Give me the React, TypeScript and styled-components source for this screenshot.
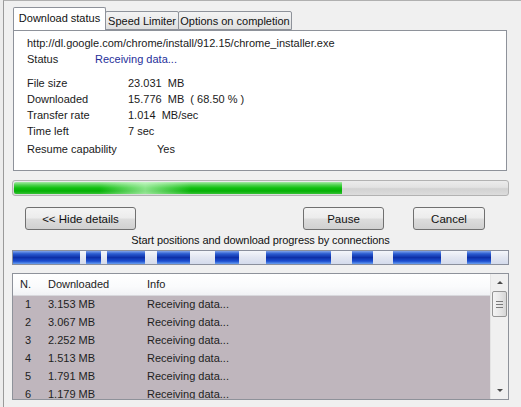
import React from 'react';
import styled, { createGlobalStyle } from 'styled-components';

const GlobalStyle = createGlobalStyle`
  html, body {
    margin: 0;
    padding: 0;
    background: #ececec;
    font-family: "Liberation Sans", Arial, sans-serif;
    font-size: 11px;
    color: #1a1a1a;
  }
  * { box-sizing: border-box; }
`;

const Frame = styled.div`
  width: 518px;
  height: 407px;
  margin-left: 3px;
  border-left: 1px solid #9a9a9a;
  border-top: 1px solid #b0b0b0;
  background: #f0f0f0;
  padding: 7px 0 0 8px;
  overflow: hidden;
`;

const TabStrip = styled.div`
  display: flex;
  align-items: flex-end;
  margin-left: 1px;
  height: 22px;
  position: relative;
  z-index: 1;
`;

const Tab = styled.div<{ $active?: boolean; $w: number }>`
  width: ${(p) => p.$w}px;
  height: ${(p) => (p.$active ? 23 : 19)}px;
  margin-right: -1px;
  border: 1px solid #8e929a;
  border-bottom: ${(p) => (p.$active ? 'none' : '1px solid #8e929a')};
  border-radius: 2px 2px 0 0;
  background: ${(p) =>
    p.$active ? '#ffffff' : 'linear-gradient(#f3f3f3 0%, #ebebeb 50%, #dedede 100%)'};
  display: flex;
  align-items: center;
  justify-content: center;
  padding-bottom: ${(p) => (p.$active ? 2 : 0)}px;
  font-size: 11px;
  color: #111;
  white-space: nowrap;
`;

const Panel = styled.div`
  width: 494px;
  height: 141px;
  margin-left: 1px;
  border: 1px solid #8e929a;
  background: #ffffff;
  padding: 4px 0 0 13px;
`;

const Line = styled.div<{ $labelW?: number; $gap?: number }>`
  display: flex;
  height: 16px;
  line-height: 16px;
  margin-top: ${(p) => p.$gap ?? 0}px;
  white-space: pre;
  & > span:first-child {
    width: ${(p) => p.$labelW ?? 0}px;
    flex: none;
  }
`;

const Blue = styled.span`
  color: #1f2f9a;
`;

const Progress = styled.div`
  width: 497px;
  height: 16px;
  margin-top: 9px;
  border: 1px solid #b2b2b2;
  border-radius: 3px;
  padding: 1px;
  background: linear-gradient(#ececec 0%, #e2e2e2 45%, #d2d2d2 55%, #dcdcdc 100%);
  display: flex;
`;

const Fill = styled.div`
  height: 100%;
  border-radius: 2px 0 0 2px;
  background:
    linear-gradient(90deg, rgba(255, 255, 255, 0) 26%, rgba(220, 255, 220, 0.6) 40%, rgba(255, 255, 255, 0) 54%),
    linear-gradient(180deg, #a6eaa6 0%, #4fd24f 25%, #10c010 50%, #07b007 75%, #34c234 100%);
`;

const ButtonRow = styled.div`
  display: flex;
  align-items: center;
  margin-top: 11px;
  padding: 0 24px 0 13px;
  width: 497px;
`;

const Button = styled.button<{ $w: number; $push?: boolean; $gap?: number }>`
  width: ${(p) => p.$w}px;
  height: 23px;
  margin-left: ${(p) => (p.$push ? 'auto' : `${p.$gap ?? 0}px`)};
  border: 1px solid #707070;
  border-radius: 3px;
  background: linear-gradient(#f4f4f4 0%, #ececec 48%, #dddddd 52%, #d0d0d0 100%);
  font-family: "Liberation Sans", Arial, sans-serif;
  font-size: 11.5px;
  color: #111;
  padding: 0;
`;

const Caption = styled.div`
  width: 497px;
  margin-top: 2px;
  height: 16px;
  line-height: 16px;
  text-align: center;
  font-size: 11px;
  letter-spacing: -0.1px;
  color: #111;
`;

const ConnBar = styled.div`
  width: 497px;
  height: 15px;
  margin-top: 2px;
  border: 1px solid #8a8f9c;
  display: flex;
  background: #e4e8f2;
`;

const Segment = styled.div<{ $on: boolean }>`
  height: 100%;
  flex: none;
  background: ${(p) =>
    p.$on
      ? 'linear-gradient(180deg, #7fa3ec 0%, #2a5bd0 22%, #0d2fa8 50%, #1c4fd0 78%, #6aa0f0 100%)'
      : 'linear-gradient(180deg, #f4f6fb 0%, #e2e6f1 50%, #d4dbec 100%)'};
`;

const List = styled.div`
  width: 497px;
  height: 127px;
  margin-top: 8px;
  border: 1px solid #8e929a;
  background: #fff;
  display: flex;
  overflow: hidden;
`;

const ListBody = styled.div`
  flex: 1;
  display: flex;
  flex-direction: column;
  overflow: hidden;
`;

const HeaderRow = styled.div`
  display: flex;
  height: 22px;
  flex: none;
  align-items: center;
  background: linear-gradient(#ffffff 0%, #fafbfc 60%, #f1f2f5 100%);
  border-bottom: 1px solid #d8d8dc;
  color: #222;
`;

const DataRow = styled.div`
  display: flex;
  height: 18px;
  flex: none;
  align-items: center;
  padding-bottom: 2px;
  background: #bfb6bd;
  color: #1e1e1e;
  white-space: pre;
`;

const Cell = styled.div<{ $w?: number; $pl?: number }>`
  width: ${(p) => (p.$w ? `${p.$w}px` : 'auto')};
  flex: ${(p) => (p.$w ? 'none' : '1')};
  padding-left: ${(p) => p.$pl ?? 0}px;
  line-height: 13px;
  overflow: hidden;
`;

const Scrollbar = styled.div`
  width: 18px;
  flex: none;
  background: #f0f0f0;
  border-left: 1px solid #e4e4e4;
  display: flex;
  flex-direction: column;
  align-items: center;
`;

const Arrow = styled.div<{ $down?: boolean }>`
  height: 17px;
  width: 100%;
  display: flex;
  align-items: center;
  justify-content: center;
  flex: none;
  margin-top: ${(p) => (p.$down ? 'auto' : '0')};
  &::after {
    content: '';
    border-left: 3px solid transparent;
    border-right: 3px solid transparent;
    ${(p) => (p.$down ? 'border-top: 3px solid #4a4a4a;' : 'border-bottom: 3px solid #4a4a4a;')}
  }
`;

const Thumb = styled.div`
  width: 15px;
  height: 26px;
  border: 1px solid #959595;
  border-radius: 2px;
  background: linear-gradient(90deg, #f4f4f4 0%, #e8e8e8 50%, #d6d6d6 100%);
  display: flex;
  flex-direction: column;
  align-items: center;
  justify-content: center;
  gap: 2px;
  & > i {
    display: block;
    width: 7px;
    height: 1px;
    background: #7a7a7a;
  }
`;

const segments: [number, boolean][] = [
  [67, true], [6, false], [15, true], [6, false], [38, true], [12, false],
  [33, true], [25, false], [24, true], [27, false], [65, true], [21, false],
  [21, true], [20, false], [48, true], [26, false], [24, true], [17, false],
];

const rows = [
  ['1', '3.153 MB'],
  ['2', '3.067 MB'],
  ['3', '2.252 MB'],
  ['4', '1.513 MB'],
  ['5', '1.791 MB'],
  ['6', '1.179 MB'],
];

const App = () => {
  const percent = 66.6;
  return (
    <>
      <GlobalStyle />
      <Frame>
        <TabStrip>
          <Tab $active $w={93}>Download status</Tab>
          <Tab $w={74}>Speed Limiter</Tab>
          <Tab $w={114}>Options on completion</Tab>
        </TabStrip>
        <Panel>
          <Line>
            <span>http://dl.google.com/chrome/install/912.15/chrome_installer.exe</span>
          </Line>
          <Line $labelW={68}>
            <span>Status</span>
            <Blue>Receiving data...</Blue>
          </Line>
          <Line $labelW={101} $gap={8}>
            <span>File size</span>
            <span>23.031  MB</span>
          </Line>
          <Line $labelW={101}>
            <span>Downloaded</span>
            <span>15.776  MB  ( 68.50 % )</span>
          </Line>
          <Line $labelW={101}>
            <span>Transfer rate</span>
            <span>1.014  MB/sec</span>
          </Line>
          <Line $labelW={101}>
            <span>Time left</span>
            <span>7 sec</span>
          </Line>
          <Line $labelW={130} $gap={2}>
            <span>Resume capability</span>
            <span>Yes</span>
          </Line>
        </Panel>
        <Progress>
          <Fill style={{ width: `${percent}%` }} />
        </Progress>
        <ButtonRow>
          <Button $w={111}>&lt;&lt; Hide details</Button>
          <Button $w={81} $push>Pause</Button>
          <Button $w={72} $gap={29}>Cancel</Button>
        </ButtonRow>
        <Caption>Start positions and download progress by connections</Caption>
        <ConnBar>
          {segments.map(([w, on], i) => (
            <Segment key={i} $on={on} style={{ width: w }} />
          ))}
        </ConnBar>
        <List>
          <ListBody>
            <HeaderRow>
              <Cell $w={35} $pl={7}>N.</Cell>
              <Cell $w={99}>Downloaded</Cell>
              <Cell>Info</Cell>
            </HeaderRow>
            {rows.map(([n, d]) => (
              <DataRow key={n}>
                <Cell $w={35} $pl={12}>{n}</Cell>
                <Cell $w={99}>{d}</Cell>
                <Cell>Receiving data...</Cell>
              </DataRow>
            ))}
          </ListBody>
          <Scrollbar>
            <Arrow />
            <Thumb>
              <i />
              <i />
              <i />
            </Thumb>
            <Arrow $down />
          </Scrollbar>
        </List>
      </Frame>
    </>
  );
};

export default App;
